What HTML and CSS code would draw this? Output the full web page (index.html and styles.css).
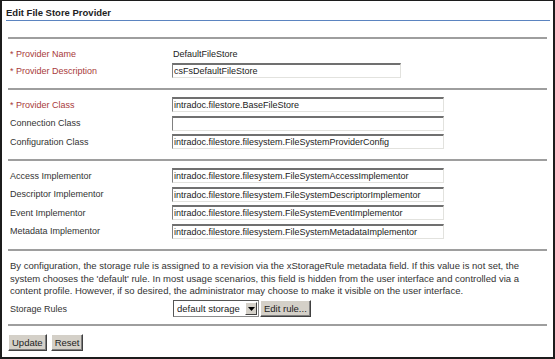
FILE: index.html
```html
<!DOCTYPE html>
<html>
	<head>
		<meta charset="utf-8">
		<title>Edit File Store Provider</title>
		<link rel="stylesheet" href="styles.css">
	</head>
	<body>
		<div class="page">
			<div class="title">Edit File Store Provider</div>

			<div class="rule first"></div>
			<!-- name / description -->
			<div class="group top">
				<div class="row tight">
					<label class="req">* Provider Name</label>
					<span class="value">DefaultFileStore</span>
				</div>
				<div class="row tight">
					<label class="req">* Provider Description</label>
					<input class="field short" type="text" value="csFsDefaultFileStore">
				</div>
			</div>

			<div class="rule"></div>
			<!-- classes -->
			<div class="group">
				<div class="row">
					<label class="req">* Provider Class</label>
					<input class="field" type="text" value="intradoc.filestore.BaseFileStore">
				</div>
				<div class="row">
					<label>Connection Class</label>
					<input class="field" type="text" value="">
				</div>
				<div class="row">
					<label>Configuration Class</label>
					<input class="field" type="text" value="intradoc.filestore.filesystem.FileSystemProviderConfig">
				</div>
			</div>

			<div class="rule"></div>
			<!-- implementors -->
			<div class="group">
				<div class="row">
					<label>Access Implementor</label>
					<input class="field" type="text" value="intradoc.filestore.filesystem.FileSystemAccessImplementor">
				</div>
				<div class="row">
					<label>Descriptor Implementor</label>
					<input class="field" type="text" value="intradoc.filestore.filesystem.FileSystemDescriptorImplementor">
				</div>
				<div class="row">
					<label>Event Implementor</label>
					<input class="field" type="text" value="intradoc.filestore.filesystem.FileSystemEventImplementor">
				</div>
				<div class="row">
					<label>Metadata Implementor</label>
					<input class="field" type="text" value="intradoc.filestore.filesystem.FileSystemMetadataImplementor">
				</div>
			</div>

			<div class="rule"></div>
			<!-- storage rules -->
			<div class="group storage">
				<p class="note">By configuration, the storage rule is assigned to a revision via the xStorageRule metadata field. If this value is not set, the system chooses the 'default' rule. In most usage scenarios, this field is hidden from the user interface and controlled via a content profile. However, if so desired, the administrator may choose to make it visible on the user interface.</p>
				<div class="row">
					<label>Storage Rules</label>
					<div class="picker">
						<div class="select">
							<span>default storage</span>
							<span class="arrow"><svg width="7" height="4" viewBox="0 0 7 4"><path d="M0 0h7L3.5 4z" fill="#000"/></svg></span>
						</div>
						<button class="btn" type="button">Edit rule...</button>
					</div>
				</div>
			</div>

			<div class="rule"></div>
			<div class="actions">
				<button class="btn" type="button">Update</button>
				<button class="btn" type="button">Reset</button>
			</div>
		</div>
	</body>
</html>
```
FILE: styles.css
```css
* {
    margin: 0;
    padding: 0;
    box-sizing: border-box;
}

body {
    background: #fff;
    font-family: "Liberation Sans", Arial, sans-serif;
    font-size: 9px;
    color: #333;
}

.page {
    width: 555px;
    height: 359px;
    border: 2px solid #1c1c1c;
    border-top-width: 1px;
    padding: 0 3px 0 4px;
}

.title {
    height: 20px;
    padding: 6px 0 0 0;
    font-size: 9.5px;
    font-weight: bold;
    color: #222;
    border-bottom: 1px solid #5b84c0;
}

.rule {
    height: 2px;
    margin: 0 3px 0 2px;
    background: #9e9e9e;
}

.rule.first {
    margin-top: 16px;
}

.group {
    padding: 5.5px 0 8px;
}

.group.top {
    padding: 6px 0 9px;
}

.row {
    display: flex;
    align-items: center;
    height: 18.5px;
    padding-left: 4px;
}

.row.tight {
    height: 17px;
}

.row label {
    width: 162px;
    flex-shrink: 0;
}

.row .req {
    color: #a83a3a;
}

.value {
    padding-left: 1px;
    color: #222;
}

.field {
    width: 272px;
    height: 15px;
    padding: 0 2px 0 1px;
    font-family: inherit;
    font-size: 9px;
    color: #222;
    background: #fff;
    border-style: solid;
    border-width: 2px 1px 1px 1px;
    border-color: #707070 #e2e2de #e2e2de #808080;
    outline: none;
}

.field.short {
    width: 229px;
}

.storage {
    padding: 9.5px 0 6px;
}

.note {
    padding-left: 4px;
    font-size: 9.5px;
    line-height: 12.5px;
    margin-bottom: 2px;
    color: #333;
}

.picker {
    display: flex;
    align-items: center;
    gap: 1px;
    margin-left: 1px;
}

.select {
    display: flex;
    align-items: center;
    justify-content: space-between;
    width: 86px;
    height: 17px;
    padding: 0 1px 0 3px;
    border: 1px solid #8a8a8a;
    border-top-color: #555;
    border-left-color: #555;
    background: #fff;
    color: #222;
    font-size: 9.5px;
}

.select .arrow {
    display: flex;
    align-items: center;
    justify-content: center;
    width: 12px;
    height: 13px;
    background: #d4d0c8;
    border: 1px solid;
    border-color: #fff #404040 #404040 #fff;
}

.btn {
    height: 17px;
    padding: 0 3px;
    font-family: inherit;
    font-size: 9.5px;
    color: #222;
    background: #d4d0c8;
    border: 1px solid;
    border-color: #fff #404040 #404040 #fff;
    box-shadow: inset -1px -1px 0 #808080;
}

.actions {
    display: flex;
    gap: 4px;
    padding: 8px 0 0 2px;
}
```
